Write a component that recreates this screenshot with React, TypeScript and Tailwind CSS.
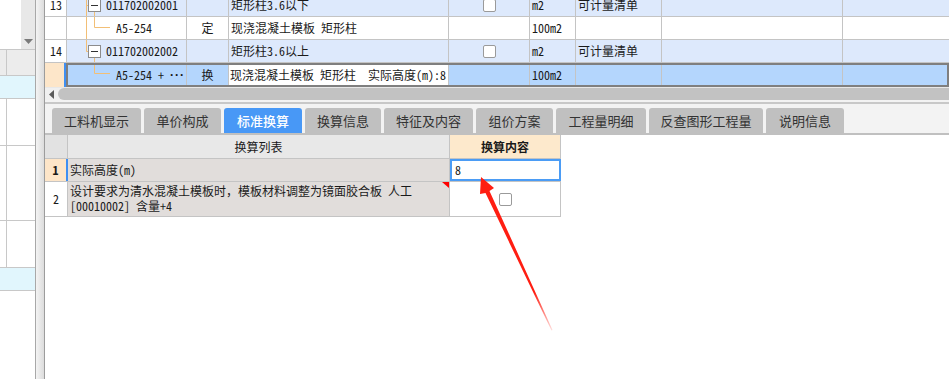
import React from 'react';

const mono = "font-['Noto_Sans_Mono_CJK_SC','Noto_Sans_CJK_SC',monospace]";
const sans = "font-['Noto_Sans_CJK_SC',sans-serif]";

const Check = () => (
  <span className="block h-[13px] w-[13px] rounded-[2px] border border-[#9a9a9a] bg-white" />
);

const TreeBox = ({ y }: { y: number }) => (
  <>
    <rect x="21.5" y={y + 0.5} width="12" height="12" fill="#fff" stroke="#8c8c8c" />
    <line x1="24" y1={y + 6.5} x2="31" y2={y + 6.5} stroke="#333" />
  </>
);

const treeColor = '#f2bf76';

function LeftPanel() {
  return (
    <div className="flex w-[36px] shrink-0 flex-col border-r border-[#a8a8a8] bg-white">
      <div className="flex h-[49px]">
        <div className="w-[21px] bg-white" />
        <div className="flex w-[14px] flex-col items-center justify-end bg-[#e8e8e8] pb-[5px]">
          <svg width="9" height="5">
            <path d="M0 0 L9 0 L4.5 5 Z" fill="#7a7a7a" />
          </svg>
        </div>
      </div>
      <div className="flex h-[26px] border-t border-[#c8c8c8] bg-[#ececec]">
        <div className="w-[7px] border-r border-[#c8c8c8]" />
      </div>
      <div className="h-[23px] border-t border-[#c8c8c8] bg-[#e1f6fd]" />
      <div className="flex h-[47px] border-t border-[#c8c8c8]">
        <div className="w-[7px] border-r border-[#c8c8c8]" />
      </div>
      <div className="flex h-[75px] border-t border-[#c8c8c8]">
        <div className="w-[7px] border-r border-[#c8c8c8]" />
      </div>
      <div className="flex h-[47px] border-t border-[#c8c8c8]">
        <div className="w-[7px] border-r border-[#c8c8c8]" />
      </div>
      <div className="h-[24px] border-y border-[#c8c8c8] bg-[#e1f6fd]" />
      <div className="flex-1" />
    </div>
  );
}

function TopGrid() {
  return (
    <div className={`h-[87px] overflow-hidden whitespace-nowrap text-[12px] text-[#1a1a1a] ${mono}`}>
      {/* row 13 */}
      <div className="-mt-[6px] flex h-[23px] border-b border-[#c4c4c4] bg-[#dde9fc]">
        <div className="flex w-[22px] shrink-0 items-center border-r border-[#c4c4c4] bg-white pl-[5px]">13</div>
        <div className="relative flex w-[120px] shrink-0 items-center border-r border-[#c4c4c4] pl-[39px]">
          <svg className="absolute left-0 top-0" width="120" height="22">
            <line x1="19.5" y1="0" x2="19.5" y2="22" stroke={treeColor} />
            <line x1="19.5" y1="11.5" x2="21.5" y2="11.5" stroke={treeColor} />
            <line x1="27.5" y1="17.5" x2="27.5" y2="22" stroke={treeColor} />
            <TreeBox y={5} />
          </svg>
          <span className="relative">011702002001</span>
        </div>
        <div className="w-[42px] shrink-0 border-r border-[#c4c4c4]" />
        <div className="flex w-[220px] shrink-0 items-center border-r border-[#c4c4c4] pl-[2px]">矩形柱3.6以下</div>
        <div className="flex w-[81px] shrink-0 items-center justify-center border-r border-[#c4c4c4]"><Check /></div>
        <div className="flex w-[46px] shrink-0 items-center border-r border-[#c4c4c4] pl-[2px]">m2</div>
        <div className="flex w-[86px] shrink-0 items-center border-r border-[#c4c4c4] pl-[2px]">可计量清单</div>
        <div className="w-[181px] shrink-0 border-r border-[#c4c4c4]" />
        <div className="flex-1" />
      </div>
      {/* row A5-254 */}
      <div className="flex h-[23px] border-b border-[#c4c4c4] bg-white">
        <div className="w-[22px] shrink-0 border-r border-[#c4c4c4]" />
        <div className="relative flex w-[120px] shrink-0 items-center border-r border-[#c4c4c4] pl-[49px]">
          <svg className="absolute left-0 top-0" width="120" height="22">
            <line x1="19.5" y1="0" x2="19.5" y2="22" stroke={treeColor} />
            <line x1="27.5" y1="0" x2="27.5" y2="10.5" stroke={treeColor} />
            <line x1="27.5" y1="10.5" x2="43" y2="10.5" stroke={treeColor} />
          </svg>
          <span className="relative">A5-254</span>
        </div>
        <div className="flex w-[42px] shrink-0 items-center justify-center border-r border-[#c4c4c4]">定</div>
        <div className="flex w-[220px] shrink-0 items-center border-r border-[#c4c4c4] pl-[2px]">现浇混凝土模板 矩形柱</div>
        <div className="w-[81px] shrink-0 border-r border-[#c4c4c4]" />
        <div className="flex w-[46px] shrink-0 items-center border-r border-[#c4c4c4] pl-[2px]">100m2</div>
        <div className="w-[86px] shrink-0 border-r border-[#c4c4c4]" />
        <div className="w-[181px] shrink-0 border-r border-[#c4c4c4]" />
        <div className="flex-1" />
      </div>
      {/* row 14 */}
      <div className="flex h-[23px] border-b border-[#c4c4c4] bg-[#dde9fc]">
        <div className="flex w-[22px] shrink-0 items-center border-r border-[#c4c4c4] bg-white pl-[5px]">14</div>
        <div className="relative flex w-[120px] shrink-0 items-center border-r border-[#c4c4c4] pl-[39px]">
          <svg className="absolute left-0 top-0" width="120" height="22">
            <line x1="19.5" y1="0" x2="19.5" y2="11.5" stroke={treeColor} />
            <line x1="19.5" y1="11.5" x2="21.5" y2="11.5" stroke={treeColor} />
            <line x1="27.5" y1="17.5" x2="27.5" y2="22" stroke={treeColor} />
            <TreeBox y={5} />
          </svg>
          <span className="relative">011702002002</span>
        </div>
        <div className="w-[42px] shrink-0 border-r border-[#c4c4c4]" />
        <div className="flex w-[220px] shrink-0 items-center border-r border-[#c4c4c4] pl-[2px]">矩形柱3.6以上</div>
        <div className="flex w-[81px] shrink-0 items-center justify-center border-r border-[#c4c4c4]"><Check /></div>
        <div className="flex w-[46px] shrink-0 items-center border-r border-[#c4c4c4] pl-[2px]">m2</div>
        <div className="flex w-[86px] shrink-0 items-center border-r border-[#c4c4c4] pl-[2px]">可计量清单</div>
        <div className="w-[181px] shrink-0 border-r border-[#c4c4c4]" />
        <div className="flex-1" />
      </div>
      {/* selected row */}
      <div className="flex h-[24px]">
        <div className="w-[21px] shrink-0 border-r-2 border-[#3f8ff2] bg-[#fde6c9]" />
        <div className="flex flex-1 border-2 border-[#7f7f7f] bg-[#b4d6fd]">
          <div className="relative flex w-[119px] shrink-0 items-center border-r border-[#c4c4c4] pl-[48px]">
            <svg className="absolute left-0 top-0" width="119" height="20">
              <line x1="26.5" y1="0" x2="26.5" y2="8.5" stroke={treeColor} />
              <line x1="26.5" y1="8.5" x2="42" y2="8.5" stroke={treeColor} />
            </svg>
            <span className="relative whitespace-pre">A5-254 + </span>
            <span className="relative font-['Liberation_Sans',sans-serif] font-bold tracking-[1px]">···</span>
          </div>
          <div className="flex w-[42px] shrink-0 items-center justify-center border-r border-[#c4c4c4]">换</div>
          <div className="flex w-[220px] shrink-0 items-center whitespace-pre border-r border-[#c4c4c4] bg-white pl-[1px]">现浇混凝土模板 矩形柱  实际高度(m):8</div>
          <div className="w-[81px] shrink-0 border-r border-[#c4c4c4]" />
          <div className="flex w-[46px] shrink-0 items-center border-r border-[#c4c4c4] pl-[2px]">100m2</div>
          <div className="w-[86px] shrink-0 border-r border-[#c4c4c4]" />
          <div className="w-[181px] shrink-0 border-r border-[#c4c4c4]" />
          <div className="flex-1" />
        </div>
      </div>
    </div>
  );
}

function Scrollbar() {
  return (
    <>
      <div className="h-[1px] bg-[#e8e8e8]" />
      <div className="flex h-[12px] bg-[#f0f0f0]">
        <div className="flex w-[13px] items-center pl-[4px]">
          <svg width="5" height="9">
            <path d="M5 0 L5 9 L0 4.5 Z" fill="#5a5a5a" />
          </svg>
        </div>
        <div className="flex-1 rounded-l-[6px] bg-[#c2c2c2]" />
      </div>
      <div className="h-[2px] bg-[#f3f3f3]" />
      <div className="h-[2px] bg-[#c8c8c8]" />
    </>
  );
}

const tabs = [
  { label: '工料机显示', w: 'w-[89px]' },
  { label: '单价构成', w: 'w-[77px]' },
  { label: '标准换算', w: 'w-[78px]', active: true },
  { label: '换算信息', w: 'w-[76px]' },
  { label: '特征及内容', w: 'w-[89px]' },
  { label: '组价方案', w: 'w-[77px]' },
  { label: '工程量明细', w: 'w-[90px]' },
  { label: '反查图形工程量', w: 'w-[114px]' },
  { label: '说明信息', w: 'w-[78px]' },
];

function Tabs() {
  return (
    <div className={`flex h-[31px] items-end gap-[3px] border-b-2 border-[#c0c0c0] bg-[#f3f3f3] pl-[7px] text-[13px] ${sans}`}>
      {tabs.map((t) => (
        <div
          key={t.label}
          className={`flex h-[25px] shrink-0 items-center justify-center rounded-t-[3px] ${t.w} ${
            t.active ? 'bg-[#4898f6] font-medium text-white' : 'bg-[#c0c0c0] text-[#333]'
          }`}
        >
          {t.label}
        </div>
      ))}
    </div>
  );
}

function BottomGrid() {
  return (
    <div className={`flex-1 bg-white text-[12px] text-[#1a1a1a] ${mono}`}>
      <div className="flex h-[24px] w-[516px] border-b border-[#c4c4c4]">
        <div className="w-[23px] shrink-0 border-r border-[#c4c4c4] bg-[#e2e2e2]" />
        <div className="flex w-[382px] shrink-0 items-center justify-center border-r border-[#c4c4c4] bg-[#e8e8e8]">换算列表</div>
        <div className="flex w-[111px] shrink-0 items-center justify-center border-r border-[#c4c4c4] bg-[#fde9cc] font-bold">换算内容</div>
      </div>
      <div className="flex h-[23px] w-[516px] border-b border-[#c4c4c4]">
        <div className="flex w-[23px] shrink-0 items-center justify-center border-r-2 border-[#3f8ff2] bg-[#fde5c8] font-bold">1</div>
        <div className="flex w-[382px] shrink-0 items-center border-r border-[#c4c4c4] bg-[#e1dddb] pl-[2px]">实际高度(m)</div>
        <div className="flex w-[111px] shrink-0 items-center border-2 border-[#4b9cf5] bg-white pl-[3px]">8</div>
      </div>
      <div className="flex h-[35px] w-[516px] border-b border-[#c4c4c4]">
        <div className="flex w-[23px] shrink-0 items-center justify-center border-r border-[#c4c4c4]">2</div>
        <div className="relative w-[382px] shrink-0 border-r border-[#c4c4c4] bg-[#e1dddb] pl-[2px] pt-[1px] leading-[15px]">
          <div>设计要求为清水混凝土模板时，模板材料调整为镜面胶合板 人工</div>
          <div>[00010002] 含量+4</div>
          <svg className="absolute right-0 top-0" width="7" height="6">
            <path d="M0 0 L7 0 L7 6 Z" fill="#f00" />
          </svg>
        </div>
        <div className="flex w-[111px] shrink-0 items-center justify-center border-r border-[#c4c4c4]">
          <Check />
        </div>
      </div>
    </div>
  );
}

function Arrow() {
  return (
    <svg className="pointer-events-none absolute left-0 top-0" width="949" height="379">
      <defs>
        <linearGradient id="fade" gradientUnits="userSpaceOnUse" x1="481" y1="178" x2="552" y2="330">
          <stop offset="0" stopColor="#ff1e12" />
          <stop offset="0.75" stopColor="#ff1e12" />
          <stop offset="1" stopColor="#ff1e12" stopOpacity="0.15" />
        </linearGradient>
      </defs>
      <path
        d="M481 177 L494 188 L489.5 191 L552.5 330 L551.5 330.5 L485.5 193 L480 194 Z"
        fill="url(#fade)"
      />
    </svg>
  );
}

export default function App() {
  return (
    <div className="relative flex h-[379px] w-[949px] overflow-hidden bg-white">
      <LeftPanel />
      <div className="w-[9px] shrink-0 border-r border-[#9c9c9c] bg-gradient-to-r from-[#f4f4f4] to-[#dcdcdc]" />
      <div className="flex min-w-0 flex-1 flex-col">
        <TopGrid />
        <Scrollbar />
        <Tabs />
        <BottomGrid />
      </div>
      <Arrow />
    </div>
  );
}
